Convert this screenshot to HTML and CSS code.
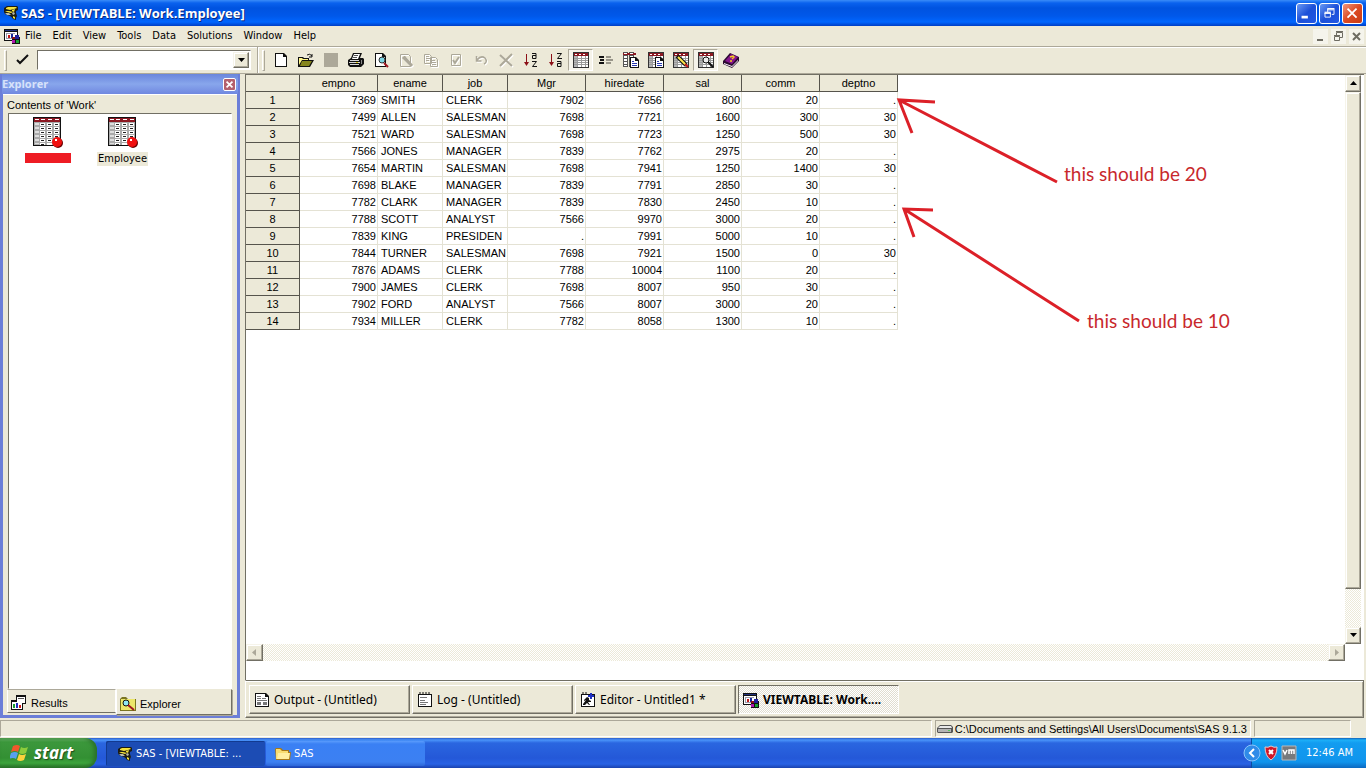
FILE: index.html
```
<!DOCTYPE html>
<html lang="en">
<head>
<meta charset="utf-8">
<title>SAS - [VIEWTABLE: Work.Employee]</title>
<link rel="stylesheet" href="styles.css">
</head>
<body>
<svg class="defs" aria-hidden="true">
  <defs>
    <symbol id="sas" viewBox="0 0 16 16">
      <path d="M1 3l3-2h10l1 1v3l-2 1v2l1 3-1 2h-3l-3-2-5-2-1-2z" fill="#1c1c14"/>
      <path d="M3 3l2-1h8l1 1-3 1-4 1-4-1z" fill="#f4e23c"/>
      <path d="M2 6h4l4 1-2 1-4-1zM9 5l3-1-1 3-2-1z" fill="#f4e23c"/>
      <path d="M2 8h4l2 2H4zM9 8l2-1 1 2-2 1z" fill="#b8b8a8"/>
      <path d="M8 11l2-1 3 3v2l-3-1z" fill="#1c1c14"/>
      <path d="M10 11l2 1v2l-2-1z" fill="#f4e23c"/>
    </symbol>
    <symbol id="view" viewBox="0 0 16 16">
      <path d="M0 1h14v12H0z" fill="#111"/>
      <path d="M1 4h12v8H1z" fill="#fff"/>
      <path d="M1 2h12v1H1z" fill="#22307c"/>
      <path d="M2 5h9v1H2zM2 5h1v6H2zM2 10h7v1H2z" fill="#99a"/>
      <path d="M4 7h2v3H4z" fill="#c01818"/>
      <path d="M7 6h2v4H7z" fill="#18289c"/>
      <path d="M8 9h8v7H8z" fill="#111"/>
      <path d="M11 7h4v4h-4z" fill="#20209a"/>
      <path d="M8 12h3v3H8z" fill="#b018b0"/>
      <path d="M12 12h3v3h-3z" fill="#18a030"/>
      <path d="M8 9h3v2H8z" fill="#8c1018"/>
    </symbol>
    <symbol id="grid" viewBox="0 0 16 16">
      <path d="M0 0h16v16H0z" fill="#333"/>
      <path d="M1 1h14v3H1z" fill="#8c1822"/>
      <path d="M2 2h2v1H2zM6 2h2v1H6zM10 2h2v1h-2z" fill="#fff"/>
      <path d="M1 4h14v11H1z" fill="#fff"/>
      <path d="M1 4h3v11H1z" fill="#b4b4b4"/>
      <path d="M1 6h14v1H1zM1 8h14v1H1zM1 10h14v1H1zM1 12h14v1H1zM4 4h1v11H4zM8 4h1v11H8zM12 4h1v11h-1z" fill="#9a9a9a"/>
    </symbol>
    <symbol id="dataset" viewBox="0 0 32 32">
      <path d="M1 0h28v29H1z" fill="#111"/>
      <path d="M2 1h26v4H2z" fill="#8c1822"/>
      <path d="M3 2h4v1H3zM9 2h4v1H9zM16 2h4v1h-4zM23 2h4v1h-4z" fill="#fff"/>
      <path d="M2 5h26v23H2z" fill="#aaa"/>
      <path d="M3 6h4v2H3zM3 10h4v2H3zM3 14h4v2H3zM3 18h4v2H3zM3 22h4v2H3zM3 26h4v1H3z" fill="#ddd"/>
      <path d="M8 6h5v3H8zM15 6h5v3h-5zM22 6h5v3h-5zM8 10h5v3H8zM15 10h5v3h-5zM22 10h5v3h-5zM8 14h5v3H8zM15 14h5v3h-5zM22 14h5v3h-5zM8 18h5v3H8zM15 18h5v3h-5zM22 18h5v3h-5zM8 22h5v3H8zM15 22h5v3h-5zM8 26h5v2H8zM15 26h5v2h-5z" fill="#fff"/>
      <path d="M9 7h3v1H9zM16 7h3v1h-3zM23 7h3v1h-3zM9 11h3v1H9zM16 11h3v1h-3zM23 11h3v1h-3zM9 15h3v1H9zM16 15h3v1h-3zM23 15h3v1h-3zM9 19h3v1H9zM16 19h3v1h-3zM23 19h3v1h-3zM9 23h3v1H9zM16 23h3v1h-3zM9 27h3v1H9z" fill="#222"/>
      <circle cx="26" cy="26" r="5" fill="#6a0000"/>
      <circle cx="25" cy="25" r="5" fill="#f01010"/>
      <path d="M23 22h2v2h-2z" fill="#fff"/>
    </symbol>
    <symbol id="paper" viewBox="0 0 9 11">
      <path d="M0 0h6l3 3v8H0z" fill="#111"/>
      <path d="M1 1h4v3h3v6H1z" fill="#fff"/>
      <path d="M2 4h2v1H2zM2 6h5v1H2zM2 8h5v1H2z" fill="#2838b0"/>
    </symbol>
  </defs>
</svg>

<header class="titlebar">
  <svg class="i16"><use href="#sas"/></svg>
  <h1>SAS - [VIEWTABLE: Work.Employee]</h1>
  <div class="winbtns">
    <button class="wb" aria-label="Minimize"><svg viewBox="0 0 21 21"><path d="M5 13h7v3H5z" fill="#fff"/></svg></button>
    <button class="wb" aria-label="Restore"><svg viewBox="0 0 21 21" fill="none" stroke="#fff"><path d="M8.500 9V5.500h7v6H13M8 5h8"/><path d="M5.500 9.500h6v5h-6zM5 9h7"/><path d="M5 10.500h7M8 6.500h7"/></svg></button>
    <button class="wb close" aria-label="Close"><svg viewBox="0 0 21 21"><path d="M5 5l10 10M15 5L5 15" stroke="#fff" stroke-width="2"/></svg></button>
  </div>
</header>

<nav class="menubar">
  <svg class="i16"><use href="#view"/></svg>
  <button>File</button><button>Edit</button><button>View</button><button>Tools</button><button>Data</button><button>Solutions</button><button>Window</button><button>Help</button>
  <div class="mdibtns">
    <button aria-label="Minimize window"><svg viewBox="0 0 15 15"><path d="M4 10h6v2H4z" fill="#6e6c62"/></svg></button>
    <button aria-label="Restore window"><svg viewBox="0 0 15 15" fill="none" stroke="#6e6c62"><path d="M5.500 6V3.500h6v5H9M5 2.500h7M3.500 7.500h5v4h-5zM3 6.500h6"/></svg></button>
    <button aria-label="Close window"><svg viewBox="0 0 15 15"><path d="M4 4l7 7M11 4l-7 7" stroke="#6e6c62" stroke-width="2"/></svg></button>
  </div>
</nav>

<div class="toolbars">
  <form class="cmd">
    <span class="grip"></span>
    <button type="button" class="tool" aria-label="Submit command"><svg class="i16" viewBox="0 0 16 16"><path d="M2 8l3 3 8-8" fill="none" stroke="#111" stroke-width="2"/></svg></button>
    <div class="combo"><input type="text" aria-label="Command"><button type="button" class="raised" aria-label="Recent commands"><svg viewBox="0 0 9 5"><path d="M1 0h7L4.500 4z"/></svg></button></div>
  </form>
  <div class="tools">
    <span class="grip"></span>
    <button class="tool" aria-label="New"><svg class="i16" viewBox="0 0 16 16"><path d="M2 1h9l3 3v11H2z" fill="#111"/><path d="M3 2h7v3h3v9H3z" fill="#fff"/></svg></button>
    <button class="tool" aria-label="Open"><svg class="i16" viewBox="0 0 16 16"><path d="M0 5h5l1 1h5v2h5l-4 7H0z" fill="#111"/><path d="M1 6h3l1 1h5v1H4l-3 5z" fill="#fff68a"/><path d="M4 9h10l-3 5H2z" fill="#85851c"/><path d="M9 3q3-2 5 1M14 2v3h-3" fill="none" stroke="#111"/></svg></button>
    <button class="tool" aria-label="Save"><svg class="i16" viewBox="0 0 16 16"><path d="M1 1h14v14H1z" fill="#aca899"/></svg></button>
    <button class="tool" aria-label="Print"><svg class="i16" viewBox="0 0 16 16"><path d="M5 1h9l-2 5h3l1 1v5l-3 3H2l-2-2V8l3-2z" fill="#111"/><path d="M6 2h6l-2 5H4z" fill="#fff"/><path d="M6 3h4v1H6zM5 5h4v1H5z" fill="#555"/><path d="M2 8h9v1H2zM1 10h11v1H1zM2 12h9v1H2z" fill="#d8d8d8"/><path d="M13 8h1v4h-1z" fill="#888"/><path d="M8 10h2v1H8z" fill="#e0d020"/></svg></button>
    <button class="tool" aria-label="Print preview"><svg class="i16" viewBox="0 0 16 16"><path d="M2 1h8l3 3v11H2z" fill="#111"/><path d="M3 2h6v3h3v9H3z" fill="#fff"/><circle cx="9" cy="8" r="3" fill="#7ed7e6" stroke="#333"/><path d="M11 11l4 4" stroke="#a01820" stroke-width="2"/></svg></button>
    <button class="tool" aria-label="Edit" disabled><svg class="i16" viewBox="0 0 16 16" fill="none" stroke="#aca899"><path d="M2.500 2.500h8l2 2v10h-10z"/><path d="M5 5l8 8M6 5l8 9" stroke-width="3"/></svg></button>
    <button class="tool" aria-label="Copy" disabled><svg class="i16" viewBox="0 0 16 16" fill="none" stroke="#aca899"><path d="M1.500 2.500h5l2 2v7h-7zM3 4.500h3M3 6.500h4M3 8.500h3"/><path d="M7.500 5.500h5l2 2v7h-7zM9 8.500h3M9 10.500h4M9 12.500h4"/></svg></button>
    <button class="tool" aria-label="Paste" disabled><svg class="i16" viewBox="0 0 16 16" fill="none" stroke="#aca899"><path d="M3.500 2.500h9v11h-9z"/><path d="M5 8l2 3 4-6" stroke-width="2"/></svg></button>
    <button class="tool" aria-label="Undo" disabled><svg class="i16" viewBox="0 0 16 16" fill="none" stroke="#aca899"><path d="M3.500 4v5h5M4 8q4-5 8-2 3 4-1 6" stroke-width="1.500"/></svg></button>
    <button class="tool" aria-label="Delete" disabled><svg class="i16" viewBox="0 0 16 16"><path d="M2 3l12 11M14 2L2 14" stroke="#aca899" stroke-width="2"/></svg></button>
    <button class="tool" aria-label="Sort ascending"><svg class="i16" viewBox="0 0 16 16" fill="none"><path d="M3.500 2v11" stroke="#8c1018"/><path d="M1 10h5L3.500 14z" fill="#8c1018"/><path d="M9 1.500h4v5H9.500v-3H13M9 9.500h4.500L9.500 14.500H14" stroke="#111"/></svg></button>
    <button class="tool" aria-label="Sort descending"><svg class="i16" viewBox="0 0 16 16" fill="none"><path d="M3.500 2v11" stroke="#8c1018"/><path d="M1 10h5L3.500 14z" fill="#8c1018"/><path d="M9 1.500h4.500L9.500 6.500H14M9 9.500h4v5H9.500v-3H13" stroke="#111"/></svg></button>
    <button class="tool on" aria-label="Table view"><svg class="i16"><use href="#grid"/></svg></button>
    <button class="tool" aria-label="Form view"><svg class="i16" viewBox="0 0 16 16"><path d="M1 4h5v2H1zM2 7h4v2H2zM1 10h5v2H1z" fill="#111"/><path d="M8 4h5v2H8zM8 7h7v2H8zM8 10h5v2H8z" fill="#99968a"/></svg></button>
    <button class="tool" aria-label="Column attributes"><svg class="i16" viewBox="0 0 16 16"><path d="M0 0h5v15H0zM6 0h5v15H6z" fill="#555"/><path d="M1 4h3v2H1zM1 7h3v2H1zM1 10h3v2H1zM7 4h3v2H7zM1 13h3v1H1z" fill="#fff"/><path d="M0 1h13v2H0z" fill="#8c1822"/><path d="M1 1h3v1H1zM7 1h3v1H7z" fill="#fff"/><use href="#paper" x="7" y="5" width="9" height="11"/></svg></button>
    <button class="tool" aria-label="Table attributes"><svg class="i16" viewBox="0 0 16 16"><use href="#grid" width="16" height="16"/><use href="#paper" x="7" y="5" width="9" height="11"/></svg></button>
    <button class="tool" aria-label="Edit mode"><svg class="i16" viewBox="0 0 16 16"><use href="#grid" width="16" height="16"/><path d="M4 4l9 9" stroke="#111" stroke-width="4"/><path d="M5 5l8 8" stroke="#ffe84a" stroke-width="2"/><path d="M12 12l3 3" stroke="#c01818" stroke-width="2"/></svg></button>
    <button class="tool on" aria-label="Browse mode"><svg class="i16" viewBox="0 0 16 16"><use href="#grid" width="16" height="16"/><circle cx="8" cy="8" r="3" fill="#eee" stroke="#111"/><path d="M10 10l5 5" stroke="#111" stroke-width="2"/></svg></button>
    <button class="tool" aria-label="Help"><svg class="i16" viewBox="0 0 16 16"><path d="M0 9l7-8 9 4v4l-7 7-9-4z" fill="#2a0830"/><path d="M2 9l6-7 7 3-6 7z" fill="#86148c"/><path d="M1 11l8 3 6-6v1l-6 6-8-3z" fill="#fff"/><path d="M7 5l3-1 1 1-2 2M8 8v2" stroke="#f4d020" stroke-width="1.500" fill="none"/></svg></button>
  </div>
</div>

<main class="work">
  <aside class="explorer">
    <div class="ex-title"><h2>Explorer</h2><button aria-label="Close Explorer"><svg viewBox="0 0 13 13"><path d="M3 3l7 7M10 3l-7 7" stroke="#fff" stroke-width="2"/></svg></button></div>
    <div class="ex-body">
      <p class="ex-label">Contents of 'Work'</p>
      <div class="ex-list">
        <div class="item"><svg class="i32"><use href="#dataset"/></svg><span class="redact"></span></div>
        <div class="item"><svg class="i32"><use href="#dataset"/></svg><span class="name">Employee</span></div>
      </div>
      <div class="ex-tabs">
        <button><svg class="i16" viewBox="0 0 16 16"><path d="M5 0h10v9H5zM0 5h12v10H0z" fill="#111"/><path d="M6 2h8v6H6zM1 7h10v7H1z" fill="#fff"/><path d="M7 3h6v1H7z" fill="#555"/><path d="M2 9h2v4H2z" fill="#18a030"/><path d="M5 8h2v5H5z" fill="#2030c0"/><path d="M8 10h2v3H8z" fill="#d01818"/></svg>Results</button>
        <button class="active"><svg class="i16" viewBox="0 0 16 16"><path d="M0 3l2-2h4l2 2h8v12H0z" fill="#7a7420"/><path d="M1 3h14v11H1z" fill="#ece66a"/><circle cx="6" cy="7" r="3" fill="#8fe8f4" stroke="#111" stroke-width="1"/><path d="M8 9l6 5" stroke="#a01820" stroke-width="2"/></svg>Explorer</button>
      </div>
    </div>
  </aside>

  <section class="right">
    <div class="view">
      <div class="view-top">
        <div class="sheet">
          <table>
            <colgroup><col class="c-n"><col class="c-w"><col class="c-s"><col class="c-s"><col class="c-w"><col class="c-w"><col class="c-w"><col class="c-w"><col class="c-w"></colgroup>
            <thead><tr><th></th><th>empno</th><th>ename</th><th>job</th><th>Mgr</th><th>hiredate</th><th>sal</th><th>comm</th><th>deptno</th></tr></thead>
            <tbody>
              <tr><th>1</th><td>7369</td><td class="t">SMITH</td><td class="t">CLERK</td><td>7902</td><td>7656</td><td>800</td><td>20</td><td>.</td></tr>
              <tr><th>2</th><td>7499</td><td class="t">ALLEN</td><td class="t">SALESMAN</td><td>7698</td><td>7721</td><td>1600</td><td>300</td><td>30</td></tr>
              <tr><th>3</th><td>7521</td><td class="t">WARD</td><td class="t">SALESMAN</td><td>7698</td><td>7723</td><td>1250</td><td>500</td><td>30</td></tr>
              <tr><th>4</th><td>7566</td><td class="t">JONES</td><td class="t">MANAGER</td><td>7839</td><td>7762</td><td>2975</td><td>20</td><td>.</td></tr>
              <tr><th>5</th><td>7654</td><td class="t">MARTIN</td><td class="t">SALESMAN</td><td>7698</td><td>7941</td><td>1250</td><td>1400</td><td>30</td></tr>
              <tr><th>6</th><td>7698</td><td class="t">BLAKE</td><td class="t">MANAGER</td><td>7839</td><td>7791</td><td>2850</td><td>30</td><td>.</td></tr>
              <tr><th>7</th><td>7782</td><td class="t">CLARK</td><td class="t">MANAGER</td><td>7839</td><td>7830</td><td>2450</td><td>10</td><td>.</td></tr>
              <tr><th>8</th><td>7788</td><td class="t">SCOTT</td><td class="t">ANALYST</td><td>7566</td><td>9970</td><td>3000</td><td>20</td><td>.</td></tr>
              <tr><th>9</th><td>7839</td><td class="t">KING</td><td class="t">PRESIDEN</td><td>.</td><td>7991</td><td>5000</td><td>10</td><td>.</td></tr>
              <tr><th>10</th><td>7844</td><td class="t">TURNER</td><td class="t">SALESMAN</td><td>7698</td><td>7921</td><td>1500</td><td>0</td><td>30</td></tr>
              <tr><th>11</th><td>7876</td><td class="t">ADAMS</td><td class="t">CLERK</td><td>7788</td><td>10004</td><td>1100</td><td>20</td><td>.</td></tr>
              <tr><th>12</th><td>7900</td><td class="t">JAMES</td><td class="t">CLERK</td><td>7698</td><td>8007</td><td>950</td><td>30</td><td>.</td></tr>
              <tr><th>13</th><td>7902</td><td class="t">FORD</td><td class="t">ANALYST</td><td>7566</td><td>8007</td><td>3000</td><td>20</td><td>.</td></tr>
              <tr><th>14</th><td>7934</td><td class="t">MILLER</td><td class="t">CLERK</td><td>7782</td><td>8058</td><td>1300</td><td>10</td><td>.</td></tr>
            </tbody>
          </table>
          <svg class="arrows" viewBox="0 0 200 240" fill="none" stroke="#dc2028" stroke-width="3"><path d="M162 87L4 5M40 7L4 5l13 33"/><path d="M184 226L9 114M38 115l-29-1 10 28"/></svg>
          <p class="note n20">this should be 20</p>
          <p class="note n10">this should be 10</p>
        </div>
        <div class="vscroll">
          <button class="raised" aria-label="Scroll up"><svg viewBox="0 0 9 5"><path d="M1 4h7L4.500 0z"/></svg></button>
          <div class="thumb raised"></div>
          <div class="track"></div>
          <button class="raised" aria-label="Scroll down"><svg viewBox="0 0 9 5"><path d="M1 0h7L4.500 4z"/></svg></button>
        </div>
      </div>
      <div class="hscroll">
        <button class="raised" aria-label="Scroll left" disabled><svg viewBox="0 0 5 9"><path d="M4 1v7L0 4.500z" fill="#aca899"/></svg></button>
        <div class="track"></div>
        <button class="raised" aria-label="Scroll right" disabled><svg viewBox="0 0 5 9"><path d="M1 1v7l4-3.500z" fill="#aca899"/></svg></button>
      </div>
    </div>
    <div class="wintabs">
      <button><svg class="i16" viewBox="0 0 16 16"><path d="M1 1h11l3 3v11H1z" fill="#111"/><path d="M2 2h9v3h3v9H2z" fill="#fff"/><path d="M3 4h4v1H3zM3 6h4v1H3zM8 6h4v1H8zM3 8h10v1H3zM3 10h4v3H3zM9 10h4v3H9z" fill="#777"/></svg>Output - (Untitled)</button>
      <button><svg class="i16" viewBox="0 0 16 16"><path d="M1 2h14v13H1z" fill="#111"/><path d="M2 3h12v11H2z" fill="#fff"/><path d="M3 0v3M6 0v3M9 0v3M12 0v3" stroke="#111"/><path d="M3 5h7v1H3zM3 8h5v1H3zM3 10h8v1H3zM3 12h6v1H3z" fill="#777"/></svg>Log - (Untitled)</button>
      <button><svg class="i16" viewBox="0 0 16 16"><path d="M1 2h14v13H1z" fill="#111"/><path d="M2 3h12v11H2z" fill="#fff"/><path d="M3 0v3M6 0v3" stroke="#111"/><path d="M7 5l2 1v2l2 1v1H8l2 3H9l-2-2-2 2H3v-1l3-4-2 1V8z" fill="#111"/><path d="M10 1h2v2h2v2h-2v2h-2V5H8V3h2z" fill="#2030c0"/></svg>Editor - Untitled1 *</button>
      <button class="current"><svg class="i16"><use href="#view"/></svg>VIEWTABLE: Work....</button>
    </div>
  </section>
</main>

<footer class="status">
  <div class="cell grow"></div>
  <div class="cell path"><svg class="i16" viewBox="0 0 16 16"><path d="M3 4h11l2 2v5l-1 1H1l-1-1V7z" fill="#555"/><path d="M3 5h11l1 2H1z" fill="#e8e8e8"/><path d="M1 8h13v3H1z" fill="#b4b4b4"/><path d="M11 9h2v1h-2z" fill="#5c5"/></svg>C:\Documents and Settings\All Users\Documents\SAS 9.1.3</div>
  <div class="cell last"></div>
</footer>

<div class="taskbar">
  <button class="start"><svg viewBox="0 0 20 20"><path d="M3 3q4-2 7 0L8 9Q5 7 1 9z" fill="#f0582c"/><path d="M11 4q3 2 7 0l-2 6q-4 2-7 0z" fill="#8ccc3c"/><path d="M1 10q4-2 7 0l-2 6q-3-2-7 0z" fill="#58a0f0"/><path d="M9 11q3 2 7 0l-2 6q-4 2-7 0z" fill="#fcd23c"/></svg>start</button>
  <button class="task pressed"><svg class="i16"><use href="#sas"/></svg>SAS - [VIEWTABLE: ...</button>
  <button class="task"><svg class="i16" viewBox="0 0 16 16"><path d="M0 3l1-1h5l2 2h6v2h2l-1 8H1z" fill="#a87818"/><path d="M1 3h4l2 2h6v8H1z" fill="#f8dc70"/><path d="M3 7h12l-1 6H2z" fill="#ffeea0"/></svg>SAS</button>
  <div class="tray">
    <button aria-label="Show hidden icons"><svg viewBox="0 0 18 18"><circle cx="9" cy="9" r="8" fill="#2f8be8" stroke="#8cc4fa"/><path d="M11 5L7 9l4 4" fill="none" stroke="#fff" stroke-width="2"/></svg></button>
    <svg class="i16" viewBox="0 0 16 16"><path d="M8 1q3 2 6 1 0 9-6 13-6-4-6-13 3 1 6-1z" fill="#d01828" stroke="#e8c8c8"/><path d="M6 5l4 4M10 5L6 9" stroke="#fff" stroke-width="2"/></svg>
    <svg class="i16" viewBox="0 0 16 16"><path d="M1 1h14v14H1z" fill="#77797c" stroke="#b8b8b8"/><path d="M2 5l2 4 2-4M8 9V5h5v4M10.500 5v4" fill="none" stroke="#fff" stroke-width="1.500"/></svg>
    <time>12:46 AM</time>
  </div>
</div>
</body>
</html>
```

FILE: styles.css
```
* { box-sizing: border-box; }
body {
  margin: 0;
  min-height: 100vh;
  display: flex;
  flex-direction: column;
  background: #ece9d8;
  color: #000;
  font: 11px/14px "DejaVu Sans Condensed", "Noto Sans", sans-serif;
}
h1, h2, p { margin: 0; }
button { margin: 0; padding: 0; border: 0; background: none; color: inherit; font: inherit; display: flex; align-items: center; }
svg { display: block; flex: none; }
.defs { position: absolute; width: 0; height: 0; }
.i16 { width: 16px; height: 16px; }
.i32 { width: 32px; height: 32px; }
.raised {
  background: #ece9d8;
  border: 1px solid;
  border-color: #f6f4ea #716f64 #716f64 #f6f4ea;
  box-shadow: inset -1px -1px #aca899, inset 1px 1px #fff;
  justify-content: center;
}
.raised svg { width: 9px; height: 5px; }

.titlebar {
  display: flex;
  align-items: center;
  height: 26px;
  padding: 0 3px;
  background: linear-gradient(#3a8cf8 0, #0a62ee 3px, #0053e0 8px, #0058ea 16px, #0066ff 22px, #003ec4 26px);
  color: #fff;
}
.titlebar h1 { flex: 1; margin-left: 2px; font: bold 13px/16px "Open Sans", sans-serif; text-shadow: 1px 1px #0a2a80; }
.winbtns { display: flex; gap: 2px; }
.wb { width: 21px; height: 21px; border: 1px solid #fff; border-radius: 3px; background: linear-gradient(135deg, #6a9af4, #1c50d8 50%, #2258e4); }
.wb svg { width: 19px; height: 19px; }
.wb.close { background: linear-gradient(135deg, #f0957c, #dc4a22 50%, #c83c14); }

.menubar { display: flex; align-items: center; height: 20px; padding: 0 2px 0 4px; }
.menubar > button { padding: 0 6px 0 5px; }
.mdibtns { display: flex; gap: 3px; margin-left: auto; }
.mdibtns button { width: 15px; height: 15px; background: #f5f4ec; }
.mdibtns svg { width: 15px; height: 15px; }

.toolbars { display: flex; height: 28px; border-top: 1px solid #aca899; border-bottom: 1px solid #aca899; box-shadow: inset 0 1px #fff; }
.cmd { display: flex; align-items: center; width: 258px; padding-left: 4px; margin: 0; border-right: 1px solid #aca899; }
.grip { width: 3px; height: 21px; border: 1px solid; border-color: #fff #aca899 #aca899 #fff; }
.tool { justify-content: center; width: 25px; height: 22px; }
.tool.on { border: 1px solid; border-color: #aca899 #fff #fff #aca899; background: #f5f3ea; }
.tool:disabled svg { filter: drop-shadow(1px 1px 0 #fff); }
.cmd .tool { margin: 0 2px 0 3px; }
.combo { display: flex; width: 214px; height: 20px; padding: 1px; background: #fff; border: 1px solid; border-color: #716f64 #fff #fff #716f64; }
.combo input { flex: 1; min-width: 0; padding: 0 2px; border: 0; font: inherit; outline: 0; }
.combo .raised { width: 16px; }
.tools { display: flex; align-items: center; flex: 1; padding-left: 3px; border-left: 1px solid #fff; }
.tools .grip { margin-right: 3px; }

.work { flex: 1; display: flex; gap: 5px; }
.explorer { display: flex; flex-direction: column; width: 240px; padding: 0 3px 3px; background: #6b7ed8; }
.ex-title { display: flex; align-items: center; justify-content: space-between; height: 20px; padding-right: 2px; background: linear-gradient(#6a86dc, #88a6ec 50%, #7088e0); margin: 0 -1px; }
.ex-title h2 { font: bold 11px/16px "Open Sans", sans-serif; color: #d8e2fa; }
.ex-title button { width: 13px; height: 13px; border: 1px solid #fff; border-radius: 2px; background: #b4606c; }
.ex-title svg { width: 11px; height: 11px; }
.ex-body { flex: 1; display: flex; flex-direction: column; padding: 3px 4px 0; background: #ece9d8; border-top: 1px solid #fff; }
.ex-label { height: 15px; font: 11px/14px "Liberation Sans", sans-serif; }
.ex-list { flex: 1; display: flex; padding: 3px 0 0 1px; margin: 0 1px; background: #fff; border: 1px solid; border-color: #716f64 #fff #fff #716f64; }
.item { display: flex; flex-direction: column; align-items: center; width: 75px; gap: 3px; }
.redact { width: 46px; height: 10px; margin-top: 1px; background: #ee1c24; }
.name { padding: 0 1px; background: #ece9d8; }
.ex-tabs { display: flex; height: 26px; align-items: flex-start; }
.ex-tabs button { gap: 4px; width: 109px; height: 24px; padding: 3px 0 0 3px; border: 1px solid; border-color: #aca899 #fff #716f64 #fff; font: 11px/14px "Liberation Sans", sans-serif; }
.ex-tabs .active { width: 116px; height: 26px; border-color: #ece9d8 #716f64 #716f64 #fff; box-shadow: 1px 1px #aca899; }

.right { flex: 1; min-width: 0; display: flex; flex-direction: column; padding-right: 2px; }
.view { flex: 1; display: flex; flex-direction: column; padding: 0 3px 19px 0; background: #fff; border-top: 1px solid #716f64; border-left: 1px solid #716f64; }
.view-top { flex: 1; display: flex; }
.sheet { flex: 1; position: relative; }
table { border-collapse: separate; border-spacing: 0; table-layout: fixed; width: 652px; font: 11px/16px "Liberation Sans", sans-serif; }
.c-n { width: 54px; }
.c-w { width: 78px; }
.c-s { width: 65px; }
th { height: 17px; padding: 0; font-weight: normal; text-align: center; background: #ece9d8; border-right: 1px solid #56544c; border-bottom: 1px solid #56544c; }
td { height: 17px; padding: 0 1px 0 0; text-align: right; border-right: 1px solid #e4e2d4; border-bottom: 1px solid #e4e2d4; }
td.t { padding: 0 0 0 3px; text-align: left; }
.arrows { position: absolute; left: 649px; top: 20px; width: 200px; height: 240px; }
.note { position: absolute; font: 19px/24px Lato, sans-serif; color: #c8282c; white-space: nowrap; }
.n20 { left: 818px; top: 87px; }
.n10 { left: 841px; top: 234px; }
.track { flex: 1; background: repeating-conic-gradient(#fff 0 25%, #ece9d8 0 50%) 0 0 / 2px 2px; }
.vscroll { display: flex; flex-direction: column; width: 16px; }
.vscroll button { height: 17px; }
.vscroll .thumb { flex: 13; }
.hscroll { display: flex; height: 17px; margin-right: 16px; }
.hscroll button { width: 17px; }
.hscroll svg { width: 5px; height: 9px; }

.wintabs { display: flex; gap: 2px; height: 38px; padding: 4px 3px 3px; border: 1px solid; border-color: #716f64 #716f64 #716f64 #fff; box-shadow: inset 0 1px #fff, inset -1px -1px #aca899; }
.wintabs button { gap: 4px; flex: 0 1 161px; min-width: 0; padding-left: 4px; white-space: nowrap; border: 1px solid; border-color: #fff #716f64 #716f64 #fff; box-shadow: inset -1px -1px #aca899; font: 12px/16px "Noto Sans", sans-serif; }
.wintabs .current { border-color: #716f64 #fff #fff #716f64; box-shadow: none; background: repeating-conic-gradient(#fff 0 25%, #e0ddd0 0 50%) 0 0 / 2px 2px; font-weight: bold; }

.status { display: flex; gap: 3px; height: 20px; padding: 2px 15px 1px 0; }
.cell { display: flex; align-items: center; gap: 2px; border: 1px solid; border-color: #aca899 #fff #fff #aca899; white-space: nowrap; }
.grow { flex: 1; }
.path { flex: none; min-width: 310px; padding: 0 3px 0 1px; font-family: "Liberation Sans", sans-serif; }
.last { width: 97px; }

.taskbar { display: flex; height: 30px; background: linear-gradient(#2c5cc8, #4a94fa 2px, #2a66e0 5px, #2458d8 20px, #2862e4 26px, #1a42ae); color: #fff; }
.start { width: 97px; gap: 4px; padding-left: 10px; margin-right: 9px; border-radius: 0 12px 12px 0; background: linear-gradient(#6cb86c, #3c983c 4px, #339033 20px, #3ca43c 25px, #277027); box-shadow: inset -3px 0 4px #2a702a; font: italic bold 17px/20px "Open Sans", sans-serif; text-shadow: 1px 1px 1px #1c4c1c; }
.start svg { width: 20px; height: 20px; }
.task { gap: 3px; width: 159px; height: 25px; margin: 3px 1px 0 0; padding-left: 9px; border-radius: 2px; background: linear-gradient(#5a9cfc, #3a80f4 3px, #3c80f2 21px, #2c66d8); white-space: nowrap; }
.task.pressed { padding-left: 11px; background: #1c4cb4; box-shadow: inset 1px 1px #123a90; }
.tray { display: flex; align-items: center; gap: 2px; margin-left: auto; padding-right: 13px; background: linear-gradient(#1460b8, #1cb0f8 2px, #129cf0 5px, #1094ec 24px, #0c68c0); border-left: 1px solid #0c4ca0; }
.tray button { margin-left: -9px; }
.tray button svg { width: 18px; height: 18px; }
.tray time { margin-left: 7px; white-space: nowrap; }
```
